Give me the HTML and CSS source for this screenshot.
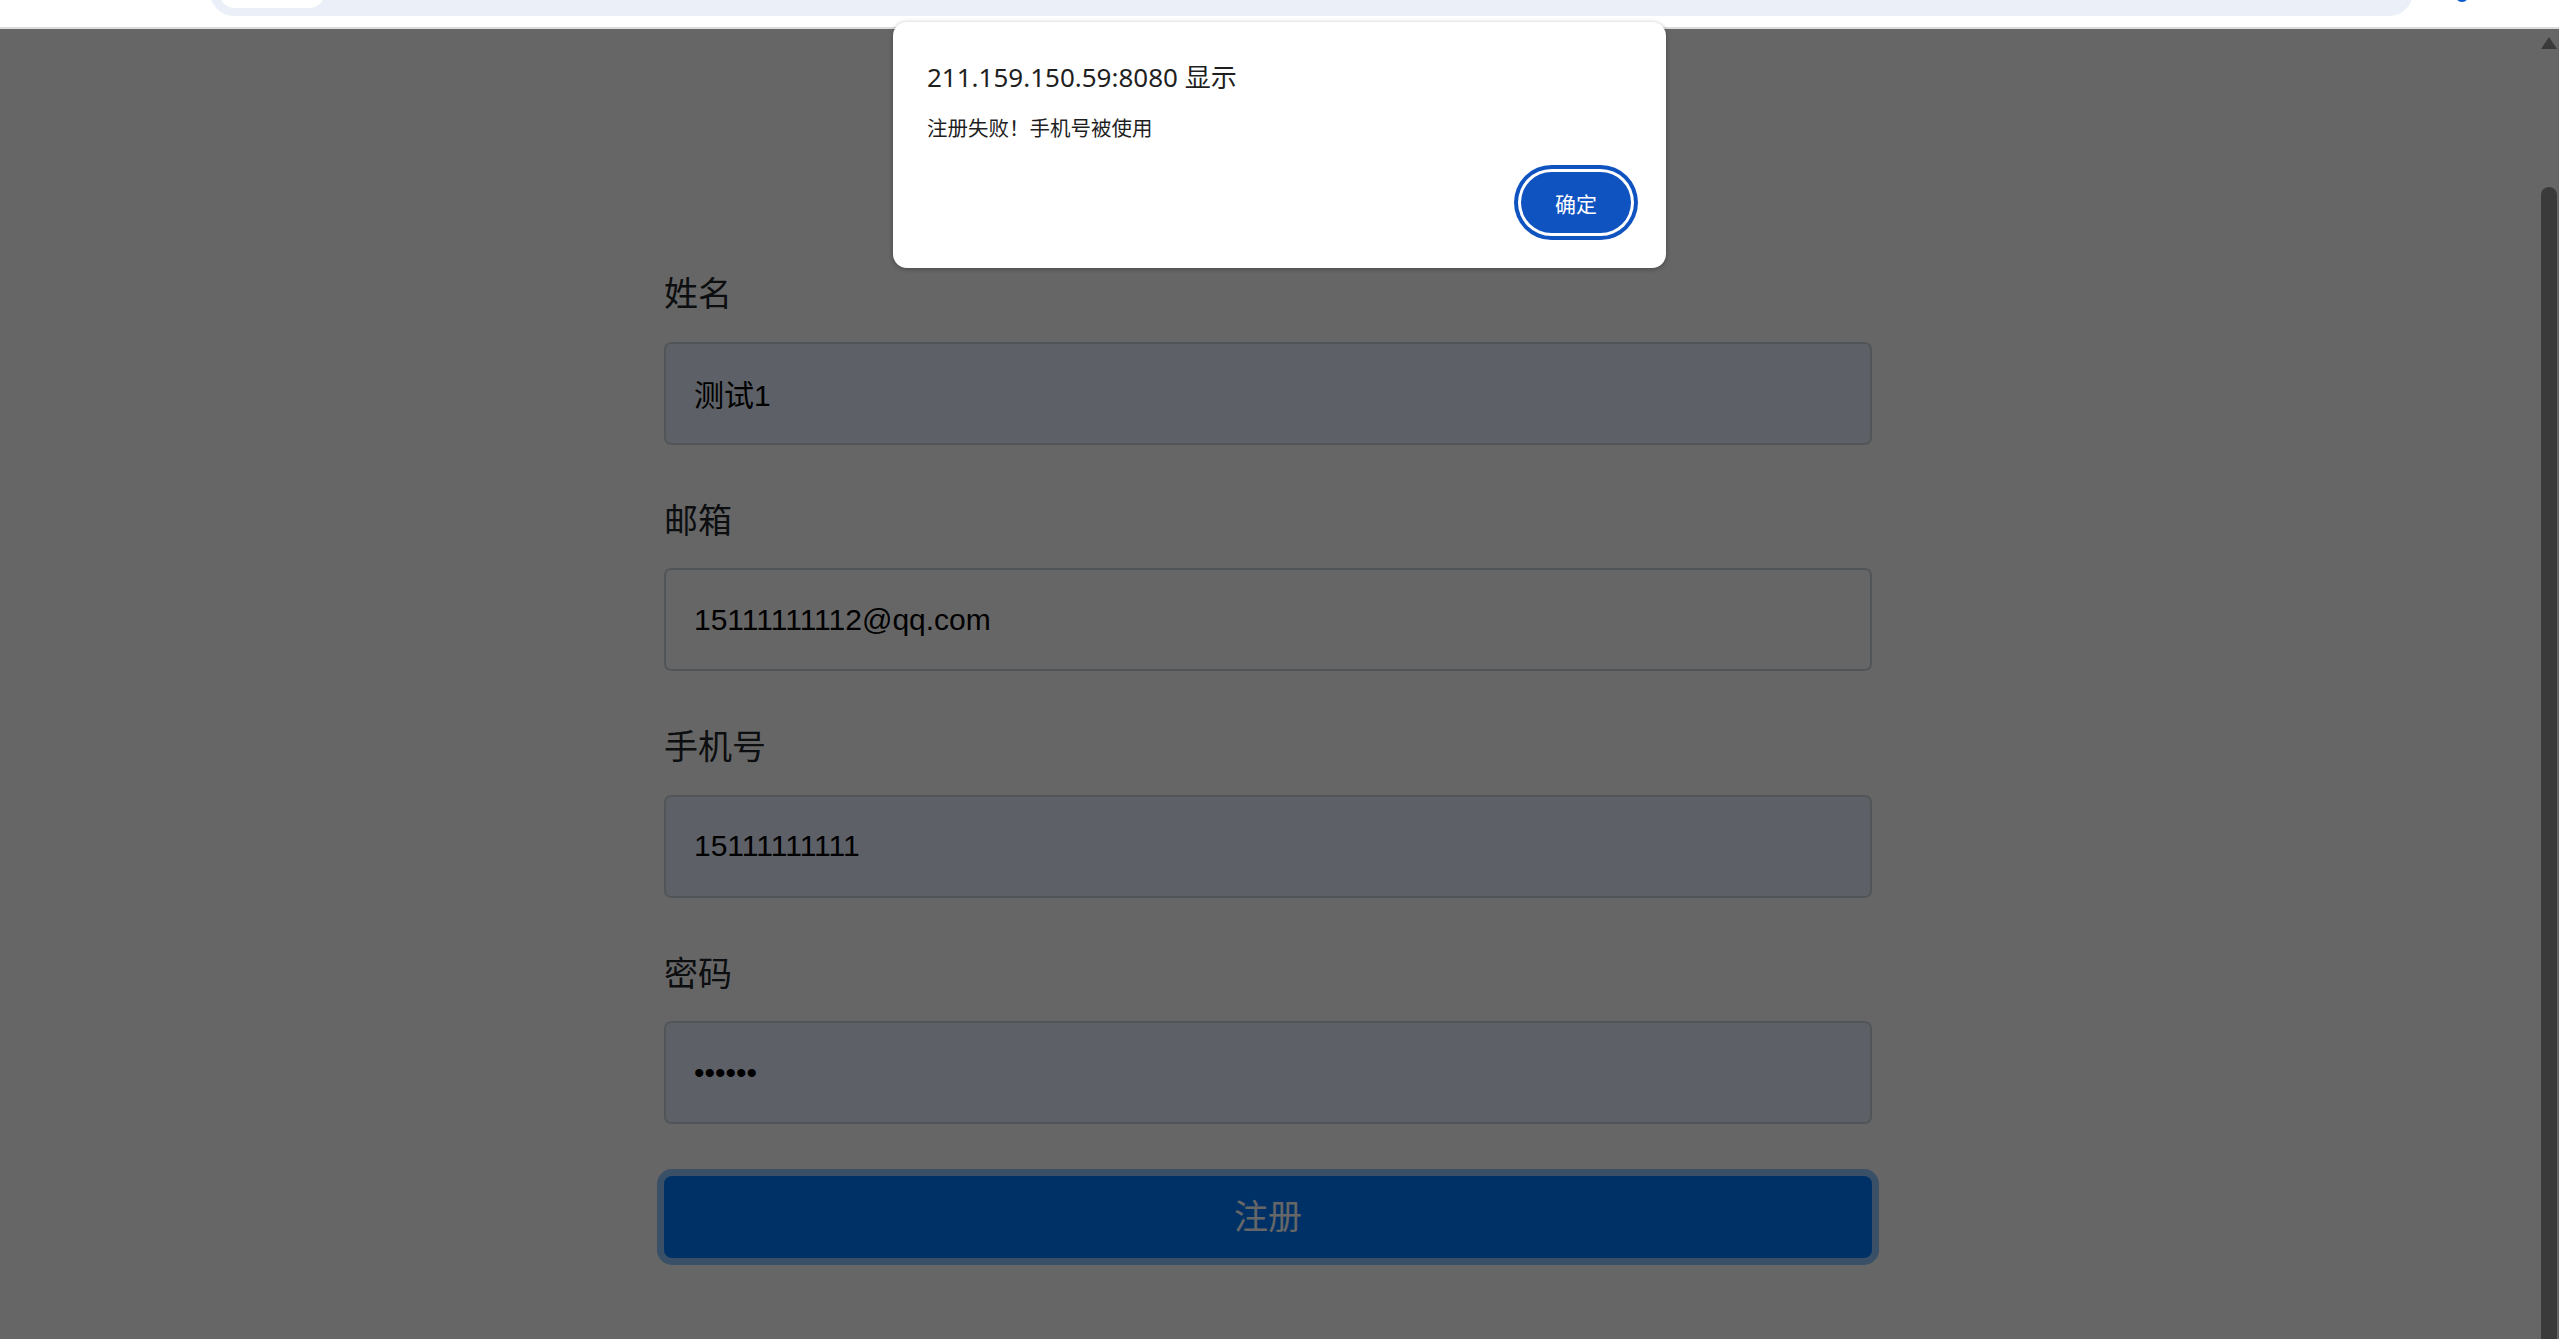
FILE: index.html
```html
<!DOCTYPE html>
<html>
<head>
    <meta http-equiv="Content-Type" content="text/html;charset=UTF-8"/>
    <title>用户注册</title>
    <link rel="stylesheet" href="styles.css">
</head>
<body>
<header class="toolbar">
    <div class="omnibox">
        <span class="site-chip"></span>
    </div>
    <span class="profile-dot"></span>
</header>
<div class="viewport">
    <main class="page">
        <form class="register-form">
            <div class="form-group">
                <label for="name">姓名</label>
                <input type="text" id="name" class="form-control autofilled" value="测试1">
            </div>
            <div class="form-group">
                <label for="email">邮箱</label>
                <input type="text" id="email" class="form-control" value="15111111112@qq.com">
            </div>
            <div class="form-group">
                <label for="phone">手机号</label>
                <input type="text" id="phone" class="form-control autofilled" value="15111111111">
            </div>
            <div class="form-group">
                <label for="password">密码</label>
                <input type="password" id="password" class="form-control autofilled" value="123456">
            </div>
            <button type="button" class="btn-submit">注册</button>
        </form>
    </main>
    <div class="scrollbar">
        <span class="scroll-arrow"></span>
        <span class="scroll-thumb"></span>
    </div>
</div>
<div class="alert-dialog">
    <div class="alert-title">211.159.150.59:8080 显示</div>
    <div class="alert-message">注册失败！手机号被使用</div>
    <div class="alert-actions">
        <button type="button" class="alert-ok">确定</button>
    </div>
</div>
</body>
</html>
```
FILE: styles.css
```css
body {
    margin: 0;
    padding: 0;
    width: 2559px;
    height: 1339px;
    overflow: hidden;
    background-color: #fff;
    font-family: "Liberation Sans", "Noto Sans CJK SC", sans-serif;
}

/* browser top bar, only its lower edge is visible */
.toolbar {
    height: 27px;
    border-bottom: 2px solid #dcdcdc;
    display: flex;
    align-items: flex-start;
    overflow: hidden;
}

.omnibox {
    margin-left: 210px;
    margin-top: -32px;
    width: 2203px;
    height: 48px;
    border-radius: 24px;
    background-color: #ebeff8;
    display: flex;
    align-items: flex-start;
    flex-shrink: 0;
}

.site-chip {
    margin-left: 9px;
    margin-top: 4px;
    width: 106px;
    height: 36px;
    border-radius: 16px;
    background-color: #fff;
}

.profile-dot {
    margin-left: 42px;
    margin-top: -12px;
    width: 14px;
    height: 14px;
    border-radius: 50%;
    background-color: #0b57d0;
    flex-shrink: 0;
}

/* page area */
.viewport {
    position: relative;
    height: 1310px;
    display: flex;
    overflow: hidden;
}

.viewport::after {
    content: "";
    position: absolute;
    top: 0;
    left: 0;
    right: 0;
    bottom: 0;
    background: rgba(0, 0, 0, 0.6);
}

.page {
    flex: 1;
}

.register-form {
    width: 1208px;
    margin: 0 auto;
    padding-top: 240px;
}

.form-group {
    margin-bottom: 51px;
}

.form-group label {
    display: block;
    font-size: 34px;
    line-height: 51px;
    margin-bottom: 21.5px;
    color: #212529;
}

.form-control {
    display: block;
    box-sizing: border-box;
    width: 100%;
    height: 103px;
    margin: 0;
    padding: 0 28px;
    border: 2px solid #ced4da;
    border-radius: 7px;
    background-color: #fff;
    font-family: "Liberation Sans", "Noto Sans CJK SC", sans-serif;
    font-size: 30px;
    color: #000;
    outline: none;
}

.form-control.autofilled {
    background-color: #e8f0fe;
}

.btn-submit {
    display: block;
    width: 100%;
    height: 82px;
    margin-top: 52px;
    padding: 0 0 6px 0;
    border: none;
    border-radius: 8px;
    background-color: #007bff;
    color: #fff;
    font-family: "Liberation Sans", "Noto Sans CJK SC", sans-serif;
    font-size: 34px;
    box-shadow: 0 0 0 7px rgba(38, 143, 255, 0.5);
}

.scrollbar {
    width: 23px;
    padding-left: 5px;
    box-sizing: border-box;
    display: flex;
    flex-direction: column;
}

.scroll-arrow {
    margin-top: 8px;
    width: 0;
    height: 0;
    border-left: 8px solid transparent;
    border-right: 8px solid transparent;
    border-bottom: 12px solid #919191;
}

.scroll-thumb {
    margin-top: 138px;
    width: 16px;
    flex: 1;
    border-radius: 8px 8px 0 0;
    background-color: #919191;
}

/* alert box */
.alert-dialog {
    position: absolute;
    top: 22px;
    left: 893px;
    width: 773px;
    box-sizing: border-box;
    padding: 37px 35px 35px 34px;
    background-color: #fff;
    border-radius: 14px;
    box-shadow: 0 1px 5px rgba(0, 0, 0, 0.3);
    font-family: "Noto Sans", "Noto Sans CJK SC", sans-serif;
    color: #1f1f1f;
    z-index: 2;
}

.alert-title {
    font-size: 26px;
    line-height: 36px;
}

.alert-message {
    margin-top: 18.5px;
    font-size: 20.5px;
    line-height: 28px;
}

.alert-actions {
    margin-top: 30.5px;
    display: flex;
    justify-content: flex-end;
}

.alert-ok {
    width: 110px;
    height: 61px;
    padding: 0;
    border: none;
    border-radius: 31px;
    background-color: #0f53c1;
    color: #fff;
    font-family: "Noto Sans CJK SC", sans-serif;
    font-size: 21px;
    box-shadow: 0 0 0 3px #fff, 0 0 0 7px #0f53c1;
}
```
